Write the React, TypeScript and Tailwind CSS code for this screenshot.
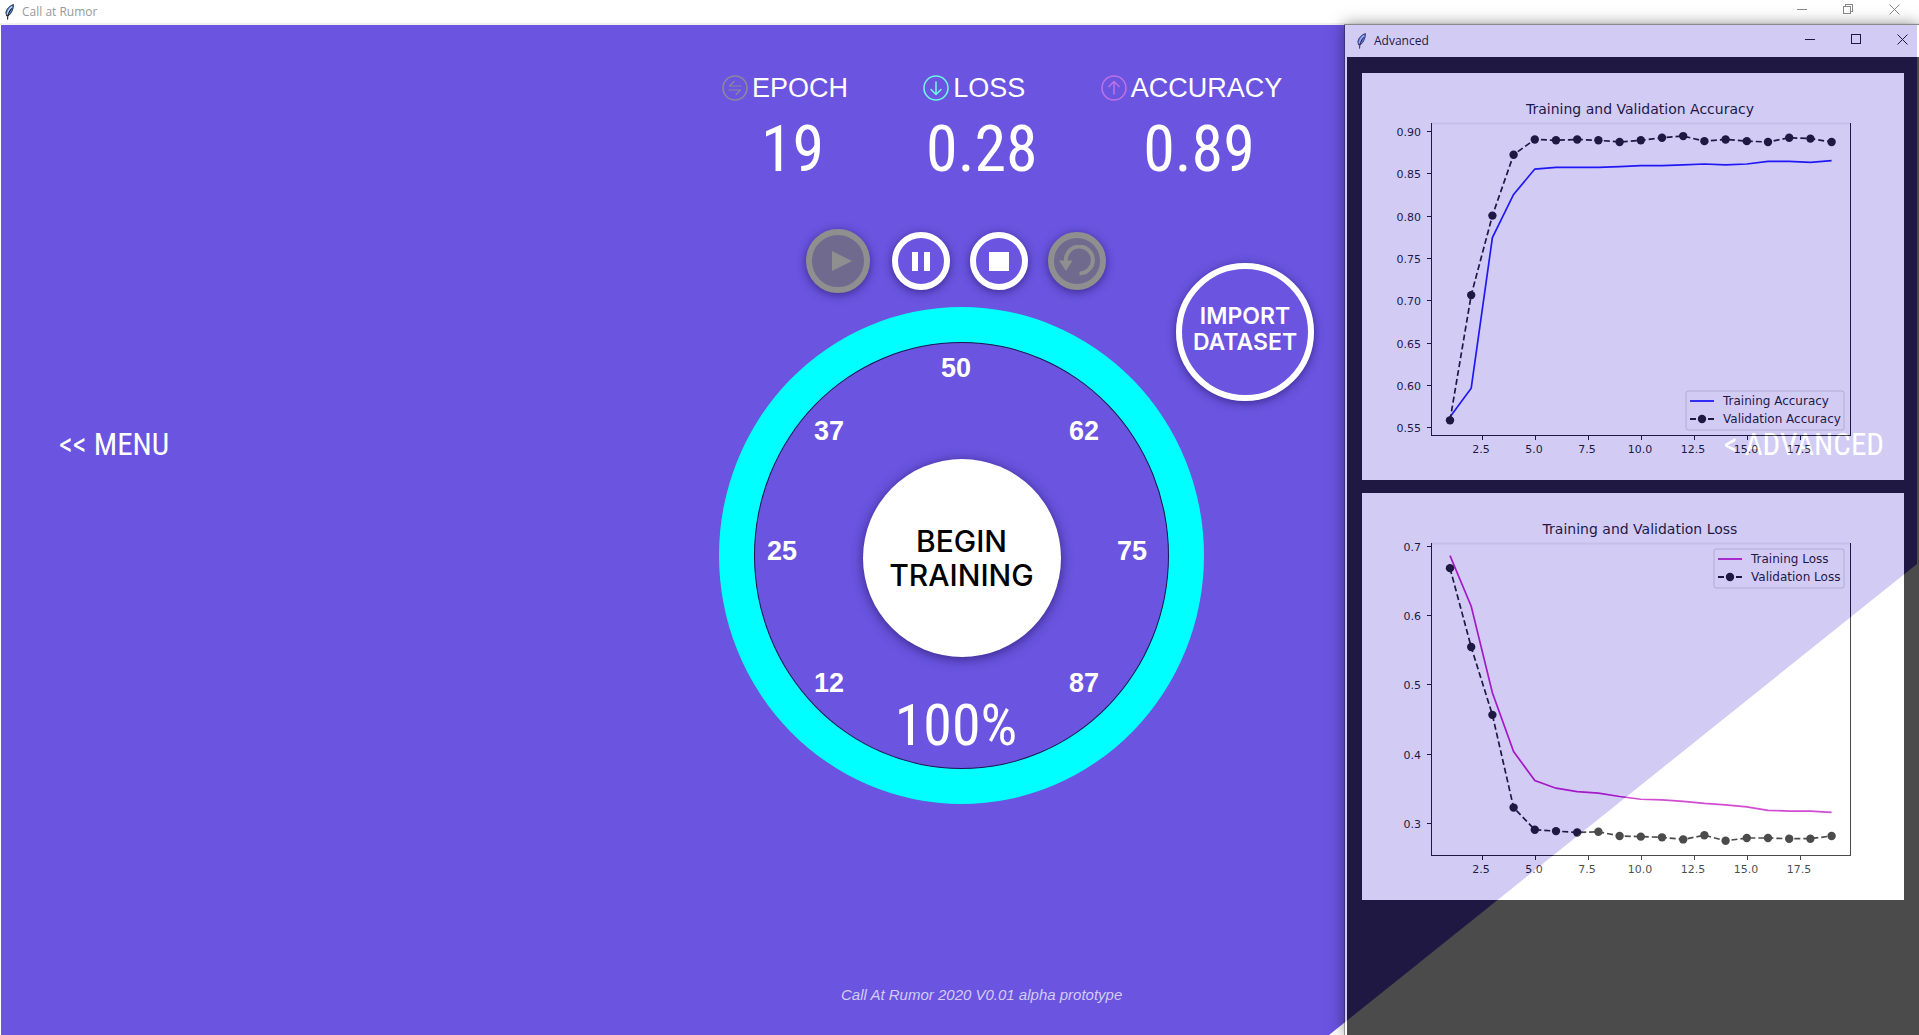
import type { ReactNode } from "react";

const CONDENSED = "font-['Roboto_Condensed','Open_Sans_Condensed',sans-serif]";

function Feather() {
  return (
    <svg viewBox="0 0 16 16" className="h-4 w-4" aria-hidden="true">
      <path d="M12.5 0.5C9 1.5 5.6 4.6 4.8 8.6L5.6 12 7.8 11.6C10.6 9 12.6 5 12.5 0.5Z" fill="#4f86d9" stroke="#111827" strokeWidth="0.8" />
      <path d="M11 2.6C8.6 4.6 6.8 7.6 6.4 10.6" fill="none" stroke="#b9d3fb" strokeWidth="1.4" />
      <path d="M10.6 4.4C8 7.6 6.4 11 6.6 15.6" fill="none" stroke="#0b0b0b" strokeWidth="1" />
    </svg>
  );
}

function WindowButtons({ restore, className }: { restore?: boolean; className: string }) {
  return (
    <div className={`flex ${className}`}>
      <button type="button" aria-label="Minimize" className="grid w-[46px] place-items-center">
        <svg viewBox="0 0 11 11" className="h-[11px] w-[11px]" fill="none" stroke="currentColor" shapeRendering="crispEdges">
          <path d="M0 5.5H10" />
        </svg>
      </button>
      <button type="button" aria-label={restore ? "Restore" : "Maximize"} className="grid w-[46px] place-items-center">
        <svg viewBox="0 0 11 11" className="h-[11px] w-[11px]" fill="none" stroke="currentColor" shapeRendering="crispEdges">
          {restore ? <path d="M0.5 2.5H7.5V9.5H0.5ZM2.5 2.5V0.5H9.5V7.5H7.5" /> : <path d="M0.5 0.5H9.5V9.5H0.5Z" />}
        </svg>
      </button>
      <button type="button" aria-label="Close" className="grid w-[46px] place-items-center">
        <svg viewBox="0 0 11 11" className="h-[11px] w-[11px]" fill="none" stroke="currentColor">
          <path d="M0.5 0.5L10.5 10.5M10.5 0.5L0.5 10.5" />
        </svg>
      </button>
    </div>
  );
}

function Stat({ label, value, icon }: { label: string; value: string; icon: ReactNode }) {
  return (
    <div className="flex flex-col items-center">
      <div className="flex items-center gap-[3px]">
        {icon}
        <span className="text-[27px] leading-8">{label}</span>
      </div>
      <div className={`mt-[10px] pl-4 text-[64px] leading-[72px] ${CONDENSED}`}>{value}</div>
    </div>
  );
}

function StatIcon({ color, children }: { color: string; children: ReactNode }) {
  return (
    <svg viewBox="0 0 28 28" className="h-7 w-7" fill="none" stroke={color} strokeWidth="1.6" strokeLinecap="round" strokeLinejoin="round" aria-hidden="true">
      <circle cx="14" cy="14" r="12" />
      {children}
    </svg>
  );
}

const roundButton = "grid place-items-center rounded-full border-[6px] shadow-[0_2px_10px_rgba(20,10,70,0.55)]";

type Series = { name: string; color: string; dashed?: boolean; values: number[] };

function Chart({
  title,
  ticks,
  decimals,
  toY,
  series,
  legend,
}: {
  title: string;
  ticks: number[];
  decimals: number;
  toY: (v: number) => number;
  series: Series[];
  legend: { x: number; y: number; width: number };
}) {
  const toX = (epoch: number) => 88 + (epoch - 1) * 21.2;
  return (
    <svg viewBox="0 0 542 407" className="block w-full bg-white font-['DejaVu_Sans',sans-serif]" role="img" aria-label={title}>
      <text x="278" y="41" textAnchor="middle" fontSize="14">{title}</text>
      <path d="M69 50.5H488" stroke="#000" strokeOpacity="0.07" strokeWidth="2" />
      <path d="M69 50V362.5H488.5V50" fill="none" stroke="#000" shapeRendering="crispEdges" />
      {ticks.map((t) => (
        <g key={t}>
          <path d={`M65 ${Math.round(toY(t))}.5H69`} stroke="#000" shapeRendering="crispEdges" />
          <text x="59" y={Math.round(toY(t)) + 5} textAnchor="end" fontSize="11">{t.toFixed(decimals)}</text>
        </g>
      ))}
      {[2.5, 5, 7.5, 10, 12.5, 15, 17.5].map((t) => (
        <g key={t}>
          <path d={`M${Math.round(toX(t))}.5 363V367`} stroke="#000" shapeRendering="crispEdges" />
          <text x={Math.round(toX(t)) - 1} y="380" textAnchor="middle" fontSize="11">{t.toFixed(1)}</text>
        </g>
      ))}
      {series.map((s) => (
        <g key={s.name}>
          <polyline
            points={s.values.map((v, i) => `${toX(i + 1)},${toY(v)}`).join(" ")}
            fill="none"
            stroke={s.color}
            strokeWidth="1.7"
            strokeDasharray={s.dashed ? "6 3" : undefined}
          />
          {s.dashed && s.values.map((v, i) => <circle key={i} cx={toX(i + 1)} cy={toY(v)} r="4.2" fill={s.color} />)}
        </g>
      ))}
      <rect x={legend.x} y={legend.y} width={legend.width} height="39" rx="2" fill="#fff" fillOpacity="0.8" stroke="#000" strokeOpacity="0.18" />
      {series.map((s, i) => (
        <g key={s.name}>
          <path
            d={`M${legend.x + 4} ${legend.y + 10 + i * 18}h24`}
            stroke={s.color}
            strokeWidth="1.8"
            strokeDasharray={s.dashed ? "6 3" : undefined}
          />
          {s.dashed && <circle cx={legend.x + 16} cy={legend.y + 10 + i * 18} r="4.2" fill={s.color} />}
          <text x={legend.x + 37} y={legend.y + 14 + i * 18} fontSize="12">{s.name}</text>
        </g>
      ))}
    </svg>
  );
}

const accuracy: Series[] = [
  { name: "Training Accuracy", color: "#0000ff", values: [0.562, 0.596, 0.774, 0.825, 0.855, 0.857, 0.857, 0.857, 0.858, 0.859, 0.859, 0.86, 0.861, 0.86, 0.861, 0.864, 0.864, 0.863, 0.865] },
  { name: "Validation Accuracy", color: "#000000", dashed: true, values: [0.558, 0.706, 0.8, 0.872, 0.89, 0.889, 0.89, 0.889, 0.887, 0.889, 0.892, 0.894, 0.888, 0.89, 0.888, 0.887, 0.892, 0.891, 0.887] },
];

const loss: Series[] = [
  { name: "Training Loss", color: "#bf00bf", values: [0.686, 0.613, 0.488, 0.403, 0.361, 0.35, 0.345, 0.343, 0.338, 0.334, 0.333, 0.331, 0.328, 0.326, 0.323, 0.318, 0.317, 0.317, 0.315] },
  { name: "Validation Loss", color: "#000000", dashed: true, values: [0.668, 0.554, 0.456, 0.322, 0.29, 0.288, 0.286, 0.287, 0.281, 0.28, 0.279, 0.276, 0.282, 0.274, 0.278, 0.278, 0.277, 0.277, 0.281] },
];

function AdvancedWindow() {
  return (
    <section
      aria-label="Advanced"
      className="absolute bottom-0 right-0 top-6 flex w-[575px] flex-col border-l border-t border-black/60 opacity-70 shadow-[0_0_14px_rgba(0,0,0,0.6)]"
    >
      <header className="flex h-8 shrink-0 items-stretch justify-between bg-white pl-2">
        <div className="flex items-center gap-[5px]">
          <Feather />
          <h2 className="font-['Open_Sans',sans-serif] text-xs">Advanced</h2>
        </div>
        <WindowButtons className="-mt-1 -mr-[6px]" />
      </header>
      <div className="flex flex-1 flex-col gap-[13px] border-l-2 border-white bg-black px-[15px] pt-4">
        <Chart
          title="Training and Validation Accuracy"
          ticks={[0.55, 0.6, 0.65, 0.7, 0.75, 0.8, 0.85, 0.9]}
          decimals={2}
          toY={(v) => 58 + (0.9 - v) * 846}
          series={accuracy}
          legend={{ x: 324, y: 318, width: 158 }}
        />
        <Chart
          title="Training and Validation Loss"
          ticks={[0.3, 0.4, 0.5, 0.6, 0.7]}
          decimals={1}
          toY={(v) => 53 + (0.7 - v) * 692}
          series={loss}
          legend={{ x: 352, y: 56, width: 130 }}
        />
      </div>
    </section>
  );
}

const dial = [
  { label: "50", place: "left-[237px] top-[61px]" },
  { label: "37", place: "left-[110px] top-[124px]" },
  { label: "62", place: "left-[365px] top-[124px]" },
  { label: "25", place: "left-[63px] top-[244px]" },
  { label: "75", place: "left-[413px] top-[244px]" },
  { label: "12", place: "left-[110px] top-[376px]" },
  { label: "87", place: "left-[365px] top-[376px]" },
];

export default function App() {
  return (
    <div className="relative flex min-h-screen flex-col overflow-hidden bg-white font-['Liberation_Sans',Arial,sans-serif]">
      <header className="flex h-[25px] shrink-0 items-stretch justify-between border-b-2 border-[#f0f0f0] pl-[1px]">
        <div className="flex items-center gap-[5px]">
          <Feather />
          <h1 className="font-['Open_Sans',sans-serif] text-xs text-[#999]">Call at Rumor</h1>
        </div>
        <WindowButtons restore className="-mt-1 mr-[2px] text-[#8a8a8a]" />
      </header>

      <main className="ml-[1px] mr-[2px] grid flex-1 grid-cols-[718fr_597px_601fr] bg-[#6a54e0] text-white [clip-path:polygon(0_0,100%_0,100%_539px,calc(100%-588px)_100%,0_100%)]">
        <nav className="pl-[58px] pt-[400px]">
          <button type="button" className={`text-[31px] leading-10 ${CONDENSED}`}>&lt;&lt; MENU</button>
        </nav>

        <div className="flex flex-col">
          <div className="flex gap-[62px] pl-[2px] pt-[47px]">
            <Stat
              label="EPOCH"
              value="19"
              icon={
                <StatIcon color="#8c8a97">
                  <g strokeWidth="1.2">
                    <path d="M20 12H8.5L13 7.500" />
                    <path d="M8 16H19.500L15 20.500" />
                  </g>
                </StatIcon>
              }
            />
            <Stat
              label="LOSS"
              value="0.28"
              icon={
                <StatIcon color="#6ff5e4">
                  <path d="M14 8V20M9 15.5L14 20.5L19 15.5" />
                </StatIcon>
              }
            />
            <Stat
              label="ACCURACY"
              value="0.89"
              icon={
                <StatIcon color="#bb72e6">
                  <path d="M14 20V8M9 12.5L14 7.5L19 12.5" />
                </StatIcon>
              }
            />
          </div>

          <div className="relative mt-[43px]">
            <div className="flex h-16 items-center gap-5 pl-[87px]">
              <button type="button" aria-label="Play" disabled className={`mr-[2px] h-16 w-16 border-[#8f8f8f] bg-[#6f6a8e] ${roundButton}`}>
                <svg viewBox="0 0 20 20" className="ml-2 h-5 w-5" fill="#8f8f8f"><path d="M0 0L20 10L0 20Z" /></svg>
              </button>
              <button type="button" aria-label="Pause" className={`h-[58px] w-[58px] border-white ${roundButton}`}>
                <svg viewBox="0 0 18 19" className="h-[19px] w-[18px]" fill="#fff"><path d="M0 0H6V19H0ZM12 0H18V19H12Z" /></svg>
              </button>
              <button type="button" aria-label="Stop" className={`h-[58px] w-[58px] border-white ${roundButton}`}>
                <svg viewBox="0 0 20 19" className="h-[19px] w-5" fill="#fff"><path d="M0 0H20V19H0Z" /></svg>
              </button>
              <button type="button" aria-label="Restart" disabled className={`h-[58px] w-[58px] border-[#8f8f8f] bg-[#6f6a8e] ${roundButton}`}>
                <svg viewBox="0 0 36 32" className="h-8 w-9" fill="none">
                  <path d="M7 17A13.5 13.5 0 1 1 20.5 28.5" stroke="#8f8f8f" strokeWidth="4" />
                  <path d="M0 15.500H13.500L7 26Z" fill="#8f8f8f" />
                </svg>
              </button>
            </div>
            <button
              type="button"
              className={`absolute right-[2px] top-[34px] h-[138px] w-[138px] pb-[6px] font-['Inter',sans-serif] text-[23px] font-semibold leading-[26px] ${roundButton}`}
            >
              <span>IMPORT<br />DATASET</span>
            </button>

            <div className="relative mt-[14px] h-[497px] w-[485px] rounded-[50%] bg-[#00ffff] p-[35px]">
              <div className="grid h-full w-full place-items-center rounded-[50%] border border-[#1c1650] bg-[#6a54e0]">
                <button
                  type="button"
                  className="mt-1 h-[198px] w-[198px] rounded-full bg-white font-['Inter',sans-serif] text-[30px] font-medium leading-[34px] text-black shadow-[0_2px_12px_rgba(20,10,70,0.6)]"
                >
                  BEGIN
                  <br />
                  TRAINING
                </button>
              </div>
              {dial.map((d) => (
                <span key={d.label} className={`absolute -translate-x-1/2 -translate-y-1/2 text-[27px] font-bold leading-8 ${d.place}`}>{d.label}</span>
              ))}
              <output className={`absolute left-[237px] top-[418px] -translate-x-1/2 -translate-y-1/2 text-[58px] leading-none ${CONDENSED}`}>100%</output>
            </div>
          </div>

          <p className="mt-auto pb-[30px] pl-[122px] text-[15px] italic leading-5 text-[#d2ccf6]">Call At Rumor 2020 V0.01 alpha prototype</p>
        </div>

        <div className="pr-[33px] pt-[400px] text-right">
          <button type="button" className={`text-[31px] leading-10 ${CONDENSED}`}>&lt; ADVANCED</button>
        </div>
      </main>

      <AdvancedWindow />
    </div>
  );
}
